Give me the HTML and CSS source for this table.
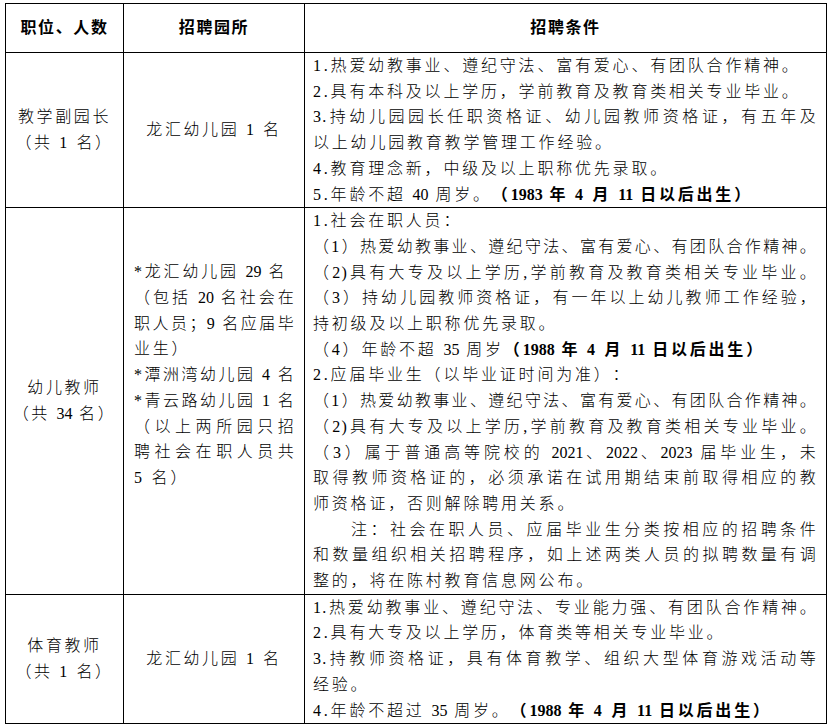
FILE: index.html
```html
<!DOCTYPE html>
<html lang="zh-CN">
<head>
<meta charset="utf-8">
<title>招聘岗位</title>
<link rel="stylesheet" href="styles.css">
</head>
<body>
<table class="recruit">
  <colgroup><col class="c1"><col class="c2"><col class="c3"></colgroup>
  <thead>
    <tr><th>职位、人数</th><th>招聘园所</th><th>招聘条件</th></tr>
  </thead>
  <tbody>
    <tr>
      <td class="pos"><div>教学副园长</div><div>（共 1 名）</div></td>
      <td class="site">龙汇幼儿园 1 名</td>
      <td class="req">
        <div class="ln">1.热爱幼教事业、遵纪守法、富有爱心、有团队合作精神。</div>
        <div class="ln">2.具有本科及以上学历，学前教育及教育类相关专业毕业。</div>
        <div class="ln j">3.持幼儿园园长任职资格证、幼儿园教师资格证，有五年及</div>
        <div class="ln">以上幼儿园教育教学管理工作经验。</div>
        <div class="ln">4.教育理念新，中级及以上职称优先录取。</div>
        <div class="ln">5.年龄不超 <span class="n">40</span> 周岁。<b>（<span class="n">1983</span> 年 4 月 <span class="n">11</span> 日以后出生）</b></div>
      </td>
    </tr>
    <tr>
      <td class="pos"><div>幼儿教师</div><div>（共 <span class="n">34</span> 名）</div></td>
      <td class="site list">
        <div class="ln">*龙汇幼儿园 <span class="n">29</span> 名</div>
        <div class="ln j">（包括 <span class="n">20</span> 名社会在</div>
        <div class="ln j">职人员；9 名应届毕</div>
        <div class="ln">业生）</div>
        <div class="ln j">*潭洲湾幼儿园 4 名</div>
        <div class="ln j">*青云路幼儿园 1 名</div>
        <div class="ln j">（以上两所园只招</div>
        <div class="ln j">聘社会在职人员共</div>
        <div class="ln">5 名）</div>
      </td>
      <td class="req">
        <div class="ln">1.社会在职人员：</div>
        <div class="ln j">（1）热爱幼教事业、遵纪守法、富有爱心、有团队合作精神。</div>
        <div class="ln j">（2)具有大专及以上学历,学前教育及教育类相关专业毕业。</div>
        <div class="ln j">（3）持幼儿园教师资格证，有一年以上幼儿教师工作经验，</div>
        <div class="ln">持初级及以上职称优先录取。</div>
        <div class="ln">（4）年龄不超 <span class="n">35</span> 周岁<b>（<span class="n">1988</span> 年 4 月 <span class="n">11</span> 日以后出生）</b></div>
        <div class="ln">2.应届毕业生（以毕业证时间为准）：</div>
        <div class="ln j">（1）热爱幼教事业、遵纪守法、富有爱心、有团队合作精神。</div>
        <div class="ln j">（2)具有大专及以上学历,学前教育及教育类相关专业毕业。</div>
        <div class="ln j">（3）属于普通高等院校的 <span class="n">2021</span>、<span class="n">2022</span>、<span class="n">2023</span> 届毕业生，未</div>
        <div class="ln j">取得教师资格证的，必须承诺在试用期结束前取得相应的教</div>
        <div class="ln">师资格证，否则解除聘用关系。</div>
        <div class="ln j note">注：社会在职人员、应届毕业生分类按相应的招聘条件</div>
        <div class="ln j">和数量组织相关招聘程序，如上述两类人员的拟聘数量有调</div>
        <div class="ln">整的，将在陈村教育信息网公布。</div>
      </td>
    </tr>
    <tr>
      <td class="pos"><div>体育教师</div><div>（共 1 名）</div></td>
      <td class="site">龙汇幼儿园 1 名</td>
      <td class="req">
        <div class="ln j">1.热爱幼教事业、遵纪守法、专业能力强、有团队合作精神。</div>
        <div class="ln">2.具有大专及以上学历，体育类等相关专业毕业。</div>
        <div class="ln j">3.持教师资格证，具有体育教学、组织大型体育游戏活动等</div>
        <div class="ln">经验。</div>
        <div class="ln">4.年龄不超过 <span class="n">35</span> 周岁。<b>（<span class="n">1988</span> 年 4 月 <span class="n">11</span> 日以后出生）</b></div>
      </td>
    </tr>
  </tbody>
</table>
</body>
</html>
```
FILE: styles.css
```css
html, body {
  margin: 0;
  padding: 0;
  background: #ffffff;
}
body {
  color: #000000;
  font-family: "Liberation Serif", "Noto Sans CJK SC", serif;
  font-size: 16px;
  font-weight: 300;
  text-spacing-trim: space-all;
}
.recruit {
  border-collapse: collapse;
  table-layout: fixed;
  width: 821px;
  margin: 3px 0 0 5px;
}
.c1 { width: 118px; }
.c2 { width: 181px; }
.c3 { width: 522px; }
.recruit th,
.recruit td {
  border: 1px solid #000000;
  padding: 0;
  line-height: 25.7px;
}
.recruit th {
  height: 48px;
  font-weight: 700;
  letter-spacing: 1.6px;
  text-align: center;
  vertical-align: middle;
}
.recruit .pos,
.recruit .site {
  text-align: center;
  vertical-align: middle;
  letter-spacing: 2.6px;
}
.recruit .site.list {
  text-align: left;
  padding: 0 9px 52px 10px;
}
.recruit .req {
  vertical-align: top;
  padding: 0 9px 0 8px;
}
.ln {
  white-space: nowrap;
  letter-spacing: 2.8px;
}
.ln.j {
  white-space: normal;
  text-align: justify;
  text-align-last: justify;
  letter-spacing: 1.2px;
}
.ln.note {
  text-indent: 38px;
}
.ln b {
  font-weight: 700;
}
.n {
  letter-spacing: 0;
}
```
